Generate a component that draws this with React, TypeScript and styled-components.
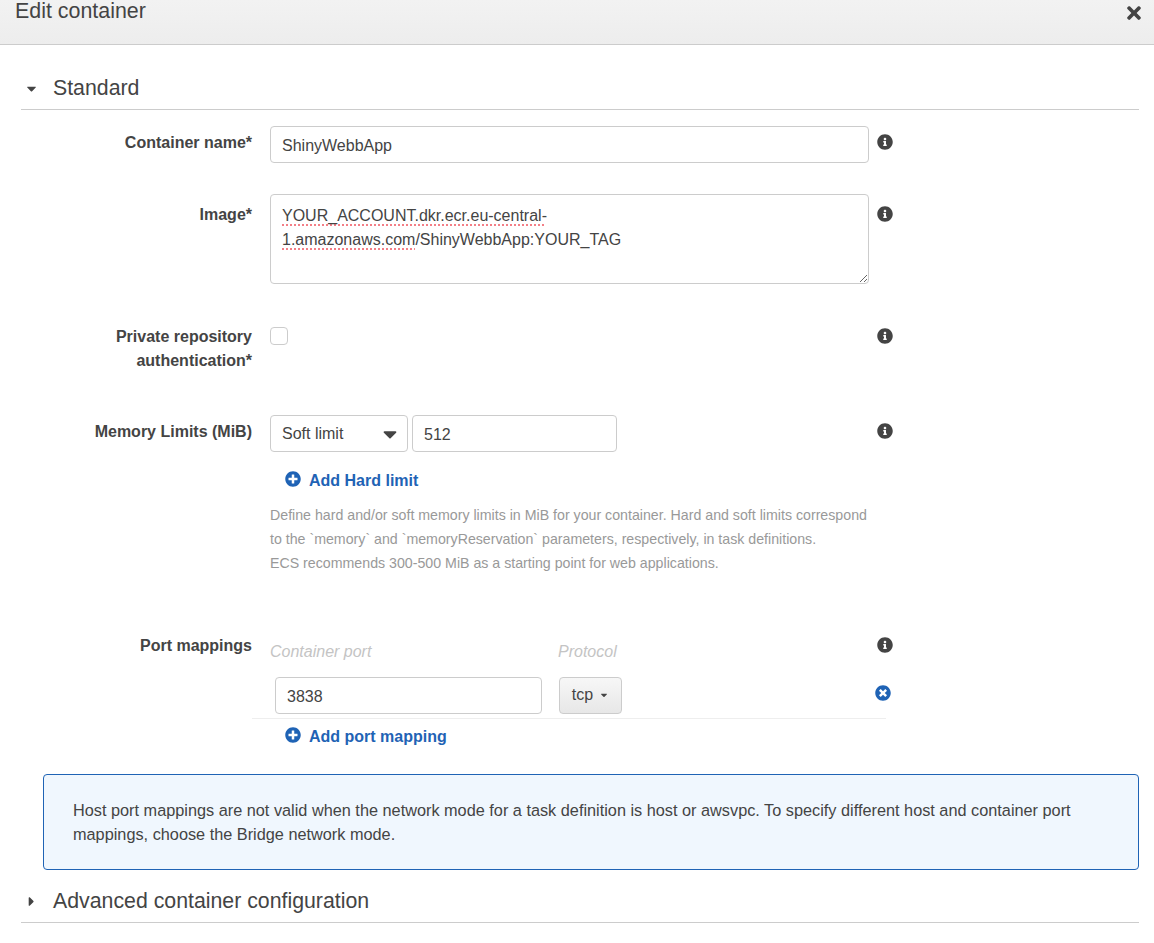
import React from "react";
import styled, { createGlobalStyle } from "styled-components";
import { FaInfoCircle, FaPlusCircle, FaTimesCircle, FaTimes, FaCaretDown, FaCaretRight } from "react-icons/fa";

const Global = createGlobalStyle`
  html, body { margin: 0; padding: 0; background: #fff; }
  body { font-family: "Liberation Sans", Arial, sans-serif; font-size: 16px; color: #444; }
  * { box-sizing: border-box; }
`;

const Page = styled.div`
  width: 1154px;
  height: 943px;
  overflow: hidden;
  -webkit-font-smoothing: antialiased;
`;
const Header = styled.header`
  height: 45px;
  display: flex;
  justify-content: space-between;
  align-items: flex-start;
  padding: 0 10px 0 15px;
  background: linear-gradient(#f2f2f2, #ededed);
  border-bottom: 1px solid #ccc;
`;
const Title = styled.h2`
  margin: 0;
  font-size: 21.4px;
  font-weight: 400;
  line-height: 22px;
  color: #444;
`;
const Close = styled.span`
  display: flex;
  padding-top: 3px;
  font-size: 20px;
  color: #444;
`;
const SectionHead = styled.div<{ $top: number }>`
  margin: ${(p) => p.$top}px 15px 0 21px;
  height: 37px;
  padding-bottom: 6px;
  display: flex;
  align-items: center;
  border-bottom: 1px solid #ccc;
  font-size: 21.3px;
  line-height: 30px;
  color: #444;
`;
const Caret = styled.span`
  width: 32px;
  padding-left: 3px;
  display: flex;
  align-items: center;
  font-size: 15px;
`;
const Row = styled.div<{ $top: number }>`
  margin-top: ${(p) => p.$top}px;
  display: grid;
  grid-template-columns: 252px 599px 34px;
  column-gap: 18px;
  align-items: start;
`;
const Label = styled.label<{ $offset?: number }>`
  padding-top: ${(p) => p.$offset ?? 5}px;
  text-align: right;
  font-weight: 700;
  line-height: 24px;
  color: #444;
`;
const Info = styled.span<{ $offset?: number }>`
  margin-top: ${(p) => p.$offset ?? 4}px;
  margin-left: -10px;
  height: 24px;
  display: flex;
  align-items: center;
  font-size: 16px;
  color: #444;
`;
const Field = styled.div``;
const TextInput = styled.input<{ $width?: number }>`
  display: block;
  width: ${(p) => (p.$width ? `${p.$width}px` : "100%")};
  height: 37px;
  padding: 2px 11px 0;
  border: 1px solid #ccc;
  border-radius: 4px;
  background: #fff;
  font: 16px "Liberation Sans", Arial, sans-serif;
  color: #444;
  outline: none;
`;
const TextArea = styled.div`
  width: 100%;
  height: 90px;
  padding: 9px 11px 7px;
  border: 1px solid #ccc;
  border-radius: 4px;
  line-height: 24px;
  overflow: auto;
  resize: both;
  color: #444;
`;
const Misspelt = styled.span`
  text-decoration: underline dotted #f0606a;
  text-underline-offset: 4px;
`;
const Check = styled.input`
  appearance: none;
  display: block;
  width: 18px;
  height: 18px;
  margin: 3px 0 0;
  border: 1px solid #ccc;
  border-radius: 4px;
  background: #fff;
`;
const Inline = styled.div`
  display: flex;
  gap: 4px;
`;
const SelectBox = styled.div`
  width: 138px;
  height: 37px;
  padding: 0 11px;
  display: flex;
  align-items: center;
  justify-content: space-between;
  border: 1px solid #ccc;
  border-radius: 4px;
  background: #fff;
  color: #444;
  svg { font-size: 22px; margin-right: -5px; }
`;
const AddLink = styled.a<{ $top: number; $left: number }>`
  margin: ${(p) => p.$top}px 0 0 ${(p) => p.$left}px;
  height: 24px;
  display: flex;
  align-items: center;
  gap: 8px;
  font-weight: 700;
  line-height: 24px;
  color: #1f63b5;
  svg { font-size: 16px; margin-top: -4px; }
`;
const Help = styled.p`
  margin: 10px 0 0;
  font-size: 14.2px;
  line-height: 24px;
  color: #999;
  white-space: nowrap;
`;
const ColumnHeads = styled.div`
  padding-top: 7px;
  display: grid;
  grid-template-columns: 288px 1fr;
  font-style: italic;
  line-height: 24px;
  color: #c4c4c4;
`;
const PortRow = styled.div`
  margin: 13px 0 0 252px;
  width: 634px;
  padding: 0 0 4px 23px;
  display: flex;
  align-items: center;
  gap: 17px;
  border-bottom: 1px solid #eee;
`;
const Dropdown = styled.button`
  width: 63px;
  height: 37px;
  margin-top: -1px;
  padding: 0;
  display: flex;
  align-items: center;
  justify-content: center;
  gap: 6px;
  border: 1px solid #ccc;
  border-radius: 4px;
  background: linear-gradient(#f7f7f7, #e7e7e7);
  font: 16px "Liberation Sans", Arial, sans-serif;
  color: #444;
  svg { font-size: 10px; }
`;
const Remove = styled.span`
  margin-left: auto;
  margin-right: -5px;
  margin-bottom: 6px;
  display: flex;
  font-size: 16px;
  color: #1f63b5;
`;
const Alert = styled.div`
  margin: 25px 15px 0 43px;
  height: 96px;
  padding: 23px 29px;
  border: 1px solid #1f63b5;
  border-radius: 4px;
  background: #f0f7fe;
  font-size: 16.3px;
  line-height: 24px;
  color: #444;
`;

export default function App() {
  return (
    <Page>
      <Global />
      <Header>
        <Title>Edit container</Title>
        <Close><FaTimes /></Close>
      </Header>

      <SectionHead $top={28}>
        <Caret><FaCaretDown /></Caret>
        Standard
      </SectionHead>

      <Row $top={16}>
        <Label>Container name*</Label>
        <Field><TextInput defaultValue="ShinyWebbApp" /></Field>
        <Info><FaInfoCircle /></Info>
      </Row>

      <Row $top={31}>
        <Label $offset={9}>Image*</Label>
        <Field>
          <TextArea>
            <Misspelt>YOUR_ACCOUNT.dkr.ecr.eu-central-</Misspelt>
            <br />
            <Misspelt>1.amazonaws.com</Misspelt>/ShinyWebbApp:YOUR_TAG
          </TextArea>
        </Field>
        <Info $offset={8}><FaInfoCircle /></Info>
      </Row>

      <Row $top={40}>
        <Label $offset={1}>Private repository<br />authentication*</Label>
        <Field><Check type="checkbox" /></Field>
        <Info $offset={0}><FaInfoCircle /></Info>
      </Row>

      <Row $top={42}>
        <Label>Memory Limits (MiB)</Label>
        <Field>
          <Inline>
            <SelectBox>Soft limit<FaCaretDown /></SelectBox>
            <TextInput $width={205} defaultValue="512" />
          </Inline>
          <AddLink $top={17} $left={15}><FaPlusCircle />Add Hard limit</AddLink>
          <Help>
            Define hard and/or soft memory limits in MiB for your container. Hard and soft limits correspond<br />
            to the `memory` and `memoryReservation` parameters, respectively, in task definitions.<br />
            ECS recommends 300-500 MiB as a starting point for web applications.
          </Help>
        </Field>
        <Info><FaInfoCircle /></Info>
      </Row>

      <Row $top={58}>
        <Label $offset={1}>Port mappings</Label>
        <ColumnHeads>
          <span>Container port</span>
          <span>Protocol</span>
        </ColumnHeads>
        <Info $offset={0}><FaInfoCircle /></Info>
      </Row>
      <PortRow>
        <TextInput $width={267} defaultValue="3838" />
        <Dropdown>tcp<FaCaretDown /></Dropdown>
        <Remove><FaTimesCircle /></Remove>
      </PortRow>
      <AddLink $top={6} $left={285}><FaPlusCircle />Add port mapping</AddLink>

      <Alert>
        Host port mappings are not valid when the network mode for a task definition is host or awsvpc. To specify different host and container port mappings, choose the Bridge network mode.
      </Alert>

      <SectionHead $top={16}>
        <Caret><FaCaretRight /></Caret>
        Advanced container configuration
      </SectionHead>
    </Page>
  );
}
